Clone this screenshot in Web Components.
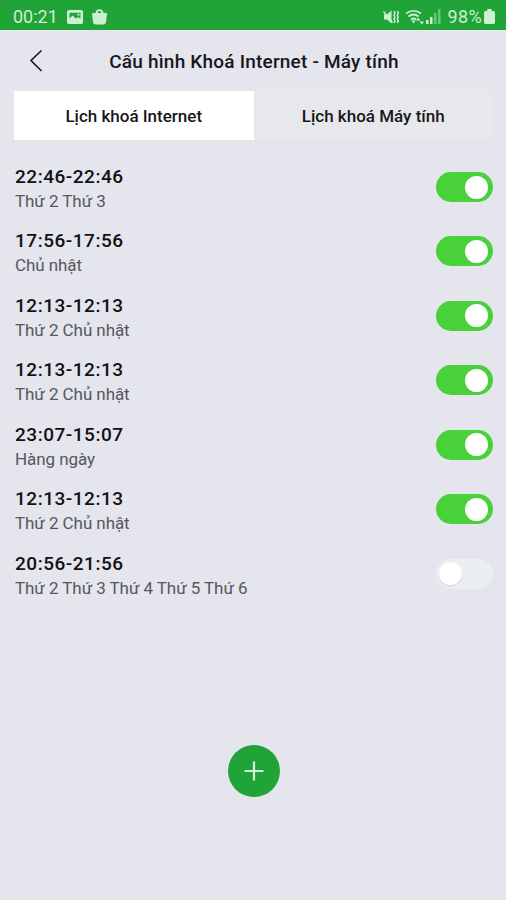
<!DOCTYPE html>
<html lang="vi"><head><meta charset="utf-8"><title>Cấu hình Khoá Internet</title>
<style>body{margin:0;font-family:Roboto,"Noto Sans",sans-serif;background:#e4e5ed}</style></head>
<body><lock-app></lock-app>
<script>
const define=(name,html)=>customElements.define(name,class extends HTMLElement{
  constructor(){super();this.attachShadow({mode:'open'}).innerHTML=html;}
});
define('status-bar',`<style>
:host{display:flex;height:30px;background:#20a337;color:#cdf0d2;align-items:center;justify-content:space-between;padding:3px 11px 0 13px;box-sizing:border-box;font-size:18px}
div{display:flex;align-items:center}svg{display:block;fill:currentColor}
.time{width:54px}.pct{letter-spacing:.4px;margin:0 2px 0 6px}
</style><div><span class="time">00:21</span>
<svg width="16" height="14" viewBox="0 0 16 15" preserveAspectRatio="none"><path fill-rule="evenodd" d="M2 0h12q2 0 2 2v11q0 2-2 2H2q-2 0-2-2V2q0-2 2-2zM2.500 3v6l3-3 3.500 3 2-1.500 2.500 2V3zM10.500 4h2v2h-2z"/></svg>
<svg style="margin-left:9px" width="15" height="16" viewBox="0 0 15 16"><path fill-rule="evenodd" d="M3.500 4Q4 .3 7.500 .3T11.500 4h2.500q1 0 1 1l-1 8q-.3 2.500-2.500 2.500h-8Q1.300 15.500 1 13L0 5q0-1 1-1zM5.500 4h4Q9 2 7.500 2T5.500 4z"/></svg></div>
<div><svg width="16" height="16" viewBox="0 0 16 16"><path d="M1 5.500h3l4.500-4v13l-4.500-4H1z"/><path d="M.5 2.500l9 11" fill="none" stroke="currentColor" stroke-width="1.500"/><path d="M11 2l1 2-1 2 1 2-1 2 1 2-1 2M14.300 2l1 2-1 2 1 2-1 2 1 2-1 2" fill="none" stroke="currentColor" stroke-width="1.500"/></svg>
<svg style="margin:0 1px 0 6px" width="20" height="16" viewBox="0 0 20 16"><g fill="none" stroke="currentColor" stroke-width="1.700"><path d="M1 4.500Q8.500-1 16 4.500M3.500 7.500q5-4 10 0M6 10.500q2.500-2 5 0"/></g><path d="M6.500 11.500h4l-2 3zM11 11.500l2.200-3 2.200 3zM14.500 12.500h4.500l-2.200 3z"/></svg>
<svg width="15" height="15" viewBox="0 0 15 15"><path d="M0 11h2.500v4H0zM4 8h2.500v7H4z"/><path opacity=".45" d="M8 4h2.500v11H8zM12 0h2.500v15H12z"/></svg>
<span class="pct">98%</span><svg width="11" height="15" viewBox="0 0 10 15" preserveAspectRatio="none"><path d="M3 0h4v2h2l1 1v11l-1 1H1l-1-1V3l1-1h2z"/></svg></div>`);
define('title-bar',`<style>
:host{display:grid;grid-template-columns:42px 1fr 42px;height:61px;padding:0 14px;align-items:center;box-sizing:border-box;color:#17171b}
h1{margin:0;text-align:center;font-size:19px;font-weight:500;letter-spacing:.2px;line-height:24px;white-space:nowrap;padding:2px 0 0 2px}svg{display:block;margin-left:15px}
</style><svg width="14" height="24" viewBox="0 0 14 24"><path d="M12.500 1.500L2 11.500l10.500 10.500" fill="none" stroke="#1b1b20" stroke-width="1.700"/></svg><h1><slot></slot></h1>`);
define('tab-item',`<style>
:host{display:flex;flex:1;height:49px;align-items:center;justify-content:center;background:#e7e8ec;color:#17171b;font-size:17px;font-weight:500;box-sizing:border-box}
:host([selected]){background:#fff}</style><slot></slot>`);
define('tab-strip',`<style>:host{display:flex;margin:0 13px 0 14px}</style><slot></slot>`);
define('toggle-switch',`<style>
:host{display:flex;box-sizing:border-box;width:57px;height:30px;border-radius:15px;padding:0 5px 0 3px;align-items:center;justify-content:flex-end;background:#49d139}
i{width:23px;height:23px;border-radius:50%;background:#fff}
:host([off]){background:#eceff1;justify-content:flex-start}:host([off]) i{box-shadow:0 1px 2px #0002}
</style><i></i>`);
define('schedule-row',`<style>
:host{display:flex;height:64.450px;justify-content:space-between;padding:0 13px 0 15px;box-sizing:border-box}
.t{font-size:19px;font-weight:500;line-height:24px;letter-spacing:.52px;color:#111114}
.d{font-size:17px;line-height:24px;letter-spacing:-.07px;color:#56575d}
.s{padding-top:7px}</style><div><div class="t"><slot name="time"></slot></div><div class="d"><slot></slot></div></div><div class="s"><slot name="switch"></slot></div>`);
define('add-button',`<style>
:host{display:flex;width:52px;height:52px;border-radius:50%;background:#20a337;align-items:center;justify-content:center}</style>
<svg width="20" height="20" viewBox="0 0 20 20"><path d="M10 .5v19M.5 10h19" stroke="#d6f3da" stroke-width="2.200"/></svg>`);
const rows=[['22:46-22:46','Thứ 2 Thứ 3'],['17:56-17:56','Chủ nhật'],['12:13-12:13','Thứ 2 Chủ nhật'],['12:13-12:13','Thứ 2 Chủ nhật'],['23:07-15:07','Hàng ngày'],['12:13-12:13','Thứ 2 Chủ nhật'],['20:56-21:56','Thứ 2 Thứ 3 Thứ 4 Thứ 5 Thứ 6',1]];
define('lock-app',`<style>:host{display:flex;flex-direction:column;height:900px;overflow:hidden;background:#e4e5ed}
.list{padding-top:25px;flex:1}footer{display:flex;justify-content:center;padding:0 0 103.500px 1px}</style>
<status-bar></status-bar><title-bar>Cấu hình Khoá Internet - Máy tính</title-bar>
<tab-strip><tab-item selected>Lịch khoá Internet</tab-item><tab-item>Lịch khoá Máy tính</tab-item></tab-strip>
<div class="list">${rows.map(([t,d,off])=>`<schedule-row><span slot="time">${t}</span>${d}<toggle-switch slot="switch"${off?' off':''}></toggle-switch></schedule-row>`).join('')}</div>
<footer><add-button></add-button></footer>`);
</script></body></html>
